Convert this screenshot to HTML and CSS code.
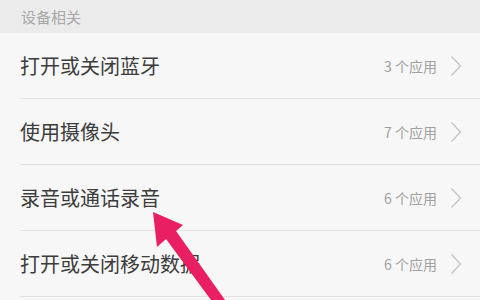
FILE: index.html
```html
<!DOCTYPE html>
<html lang="zh-CN">
<head>
<meta charset="utf-8">
<title>设备相关</title>
<link rel="stylesheet" href="styles.css">
</head>
<body>
<div class="screen">
  <div class="section-title">设备相关</div>
  <ul class="list">
    <li class="row"><span class="label">打开或关闭蓝牙</span><span class="meta">3 个应用</span><svg class="chev" viewBox="0 0 12 22" width="12" height="22"><path d="M1.5 1.5 L10.5 11 L1.5 20.5"/></svg></li>
    <li class="row"><span class="label">使用摄像头</span><span class="meta">7 个应用</span><svg class="chev" viewBox="0 0 12 22" width="12" height="22"><path d="M1.5 1.5 L10.5 11 L1.5 20.5"/></svg></li>
    <li class="row"><span class="label">录音或通话录音</span><span class="meta">6 个应用</span><svg class="chev" viewBox="0 0 12 22" width="12" height="22"><path d="M1.5 1.5 L10.5 11 L1.5 20.5"/></svg></li>
    <li class="row"><span class="label">打开或关闭移动数据</span><span class="meta">6 个应用</span><svg class="chev" viewBox="0 0 12 22" width="12" height="22"><path d="M1.5 1.5 L10.5 11 L1.5 20.5"/></svg></li>
  </ul>
  <svg class="arrow" viewBox="0 0 480 300" width="480" height="300">
    <polygon points="153,212 183,225 176,231 225,300 211,300 166,239 157,247"/>
  </svg>
</div>
</body>
</html>
```

FILE: styles.css
```css
html, body {
  margin: 0;
  padding: 0;
  background: #f7f7f7;
}
.screen {
  position: relative;
  width: 480px;
  height: 300px;
  overflow: hidden;
  background: #f7f7f7;
  font-family: "Noto Sans CJK SC", "Noto Sans", sans-serif;
}
.section-title {
  height: 33px;
  box-sizing: border-box;
  padding-left: 21px;
  display: flex;
  align-items: center;
  background: #ebebeb;
  color: #a8a8a8;
  font-size: 15px;
}
.list {
  list-style: none;
  margin: 0;
  padding: 0;
}
.row {
  height: 66px;
  box-sizing: border-box;
  margin-left: 20px;
  padding-right: 18px;
  border-bottom: 1px solid #e2e2e2;
  display: flex;
  align-items: center;
}
.label {
  flex: 1;
  font-size: 20px;
  color: #3c3c3c;
}
.meta {
  font-size: 14px;
  color: #a0a0a0;
  margin-right: 13px;
}
.chev {
  display: block;
}
.chev path {
  fill: none;
  stroke: #c2c2c2;
  stroke-width: 1.3;
}
.arrow {
  position: absolute;
  left: 0;
  top: 0;
}
.arrow polygon {
  fill: #e91e63;
}
```
